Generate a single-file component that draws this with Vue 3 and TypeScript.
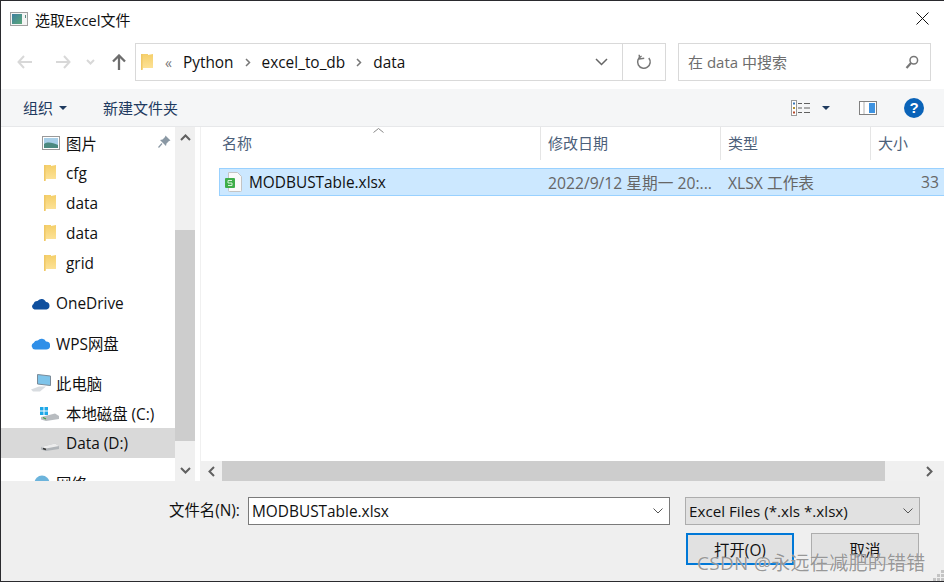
<template>
  <div class="dialog">
    <header class="titlebar">
      <svg class="title-icon" width="18" height="14" viewBox="0 0 18 14">
        <rect x="0.5" y="0.5" width="17" height="13" fill="#f4f4f4" stroke="#a0a0a0" />
        <defs>
          <linearGradient id="ti" x1="0" y1="0" x2="1" y2="1">
            <stop offset="0" stop-color="#3f7fa0" />
            <stop offset="1" stop-color="#5aa878" />
          </linearGradient>
        </defs>
        <rect x="2" y="2" width="10" height="10" fill="url(#ti)" />
        <rect x="15" y="3" width="1" height="3" fill="#5a8a80" />
      </svg>
      <span class="title-text">选取Excel文件</span>
      <svg class="close" width="13" height="13" viewBox="0 0 13 13">
        <path d="M0.5 0.5L12.5 12.5M12.5 0.5L0.5 12.5" stroke="#111" stroke-width="1" fill="none" />
      </svg>
    </header>

    <nav class="navbar">
      <div class="nav-buttons">
        <svg width="16" height="14" viewBox="0 0 16 14"><path d="M7 1L1.5 7L7 13M2 7H15" class="arrow-off" /></svg>
        <svg width="16" height="14" viewBox="0 0 16 14"><path d="M9 1L14.500 7L9 13M14 7H1" class="arrow-off" /></svg>
        <svg width="9" height="6" viewBox="0 0 9 6"><path d="M1 1L4.500 4.500L8 1" class="arrow-off" /></svg>
        <svg width="14" height="16" viewBox="0 0 14 16"><path d="M1 7.500L7 1.500L13 7.500M7 2V16" class="arrow-on" /></svg>
      </div>
      <div class="address">
        <svg class="folder-small" width="12" height="18" viewBox="0 0 12 18"><use href="#folder" /></svg>
        <span class="crumb-more">«</span>
        <span>Python</span>
        <svg width="6" height="9" viewBox="0 0 6 9"><path d="M1 1L4.500 4.500L1 8" class="crumb-sep" /></svg>
        <span>excel_to_db</span>
        <svg width="6" height="9" viewBox="0 0 6 9"><path d="M1 1L4.500 4.500L1 8" class="crumb-sep" /></svg>
        <span>data</span>
        <span class="spacer" />
        <svg width="13" height="8" viewBox="0 0 13 8"><path d="M1 1L6.500 6.500L12 1" fill="none" stroke="#666" stroke-width="1.500" /></svg>
        <span class="address-refresh">
          <svg width="16" height="16" viewBox="0 0 16 16">
            <path d="M12.800 4A6.300 6.300 0 1 1 5.600 2.100" fill="none" stroke="#777" stroke-width="1.500" />
            <path d="M3.500 0.500V4.800H8" fill="none" stroke="#777" stroke-width="1.500" transform="rotate(-8 5 3)" />
          </svg>
        </span>
      </div>
      <div class="search">
        <span class="search-text">在 data 中搜索</span>
        <svg width="14" height="15" viewBox="0 0 14 15">
          <circle cx="8.800" cy="5.200" r="3.800" fill="none" stroke="#777" stroke-width="1.500" />
          <path d="M6 8L1.500 13" stroke="#777" stroke-width="2.200" />
        </svg>
      </div>
    </nav>

    <div class="toolbar">
      <span class="tool">组织</span>
      <span class="caret dark tool-caret" />
      <span class="tool new-folder">新建文件夹</span>
      <span class="spacer" />
      <svg class="view-icon" width="19" height="16" viewBox="0 0 19 16">
        <rect x="0.500" y="0.500" width="5" height="15" fill="#fff" stroke="#9a9a9a" />
        <rect x="2" y="2.500" width="2" height="2" fill="#3a78b8" />
        <rect x="2" y="7" width="2" height="2" fill="#b09030" />
        <rect x="2" y="11.500" width="2" height="2" fill="#b84a2a" />
        <path d="M7 3.500H11M13 3.500H19M7 8H11M13 8H19M7 12.500H11M13 12.500H19" stroke="#606060" />
      </svg>
      <span class="caret dark view-caret" />
      <svg class="pane-icon" width="18" height="14" viewBox="0 0 18 14">
        <rect x="0.500" y="0.500" width="17" height="13" fill="#fff" stroke="#808080" />
        <rect x="10" y="2" width="6" height="10" fill="#3d92e0" />
        <path d="M5 1V13" stroke="#b0b0b0" />
      </svg>
      <span class="help">?</span>
    </div>

    <main class="body">
      <aside class="sidebar">
        <div class="tree">
          <div class="tree-row sub pinned">
            <svg class="pic-icon" width="18" height="14" viewBox="0 0 18 14">
              <rect x="0.500" y="0.500" width="17" height="13" fill="#fff" stroke="#999" />
              <rect x="2" y="2" width="14" height="10" fill="#a8cfe8" />
              <path d="M2 8C6 5 11 7 16 9V12H2Z" fill="#4c8a80" />
            </svg>
            <span>图片</span>
            <svg class="pin" width="13" height="13" viewBox="0 0 13 13">
              <path d="M7.500 0.500L12.500 5.500L11 6L8.500 8.500L8 11L2 5L4.500 4.500L7 2Z" fill="#8a98a4" />
              <path d="M4 8.500L0.500 12.500" stroke="#8a98a4" stroke-width="1.200" />
            </svg>
          </div>
          <div v-for="f in folders" :key="f.id" class="tree-row sub">
            <svg class="folder-icon" width="12" height="18" viewBox="0 0 12 18"><use href="#folder" /></svg>
            <span>{{ f.name }}</span>
          </div>
          <div class="tree-row top gap">
            <svg class="cloud" width="19" height="13" viewBox="0 0 19 13">
              <path d="M3.500 12.500A3 3 0 0 1 2.500 7A4 4 0 0 1 6.500 4A5 5 0 0 1 15 5A3.800 3.800 0 0 1 15.500 12.500Z" fill="#0f4f9e" />
            </svg>
            <span>OneDrive</span>
          </div>
          <div class="tree-row top gap">
            <svg class="cloud" width="19" height="14" viewBox="0 0 19 14">
              <path d="M4 13.500A3.500 3.500 0 0 1 2.800 6.800A4 4 0 0 1 6.800 4.500A5 5 0 0 1 15 5.500A4 4 0 0 1 15.200 13.500Z" fill="#2f8fe8" />
            </svg>
            <span>WPS网盘</span>
          </div>
          <div class="tree-row top gap">
            <svg class="monitor" width="20" height="18" viewBox="0 0 20 18">
              <path d="M6.500 0.500L19.500 2V11.500L6.500 10Z" fill="#7ec4ea" stroke="#7a8a98" />
              <path d="M0 15.500L8 12.500H15L9 17.500H2Z" fill="#d8dce0" />
            </svg>
            <span>此电脑</span>
          </div>
          <div class="tree-row sub drive">
            <svg class="drive-icon" width="20" height="16" viewBox="0 0 20 16">
              <path d="M0 2H3.500V5.500H0ZM4.500 2H8V5.500H4.500ZM0 6.500H3.500V10H0ZM4.500 6.500H8V10H4.500Z" fill="#1fa8e8" />
              <path d="M1 12L15 8.500L19 11V14L6 16L1 14.500Z" fill="#b8bcc0" />
              <path d="M3 12.500L6 14" stroke="#40a040" stroke-width="1.200" />
            </svg>
            <span>本地磁盘 (C:)</span>
          </div>
          <div class="tree-row sub drive selected">
            <svg class="drive-icon" width="20" height="16" viewBox="0 0 20 16">
              <path d="M1 12L15 8.500L19 11V14L6 16L1 14.500Z" fill="#b0b4b8" />
              <path d="M1 12L15 8.500L19 11L6 13.500Z" fill="#ececec" />
              <path d="M3 13.500L6 14.500" stroke="#333" stroke-width="1.400" />
            </svg>
            <span>Data (D:)</span>
          </div>
          <div class="tree-row top gap">
            <svg class="cloud" width="19" height="18" viewBox="0 0 19 18">
              <circle cx="11" cy="9" r="7.500" fill="#6cb4dc" />
              <path d="M1 14C5 10 10 10 14 13L8 16Z" fill="#a8d4ec" />
            </svg>
            <span>网络</span>
          </div>
        </div>
        <div class="vscroll">
          <svg class="scroll-arrow" width="11" height="7" viewBox="0 0 11 7"><path d="M1 6L5.500 1.500L10 6" /></svg>
          <div class="vtrack"><div class="vthumb" /></div>
          <svg class="scroll-arrow" width="11" height="7" viewBox="0 0 11 7"><path d="M1 1L5.500 5.500L10 1" /></svg>
        </div>
      </aside>

      <section class="files">
        <div class="file-head">
          <svg class="sort" width="11" height="5" viewBox="0 0 11 5"><path d="M0.500 4.500L5.500 0.500L10.500 4.500" fill="none" stroke="#888" /></svg>
          <div class="col col-name">名称</div>
          <div class="col col-date">修改日期</div>
          <div class="col col-type">类型</div>
          <div class="col col-size">大小</div>
        </div>
        <div class="file-list">
          <div class="file-row">
            <div class="cell-name">
              <svg width="18" height="20" viewBox="0 0 18 20">
                <path d="M3.500 0.500H12.500L16.500 4.500V18.500Q16.500 19.500 15.500 19.500H4.500Q3.500 19.500 3.500 18.500Z" fill="#fafafa" stroke="#c4c4c4" />
                <rect x="0" y="6" width="10" height="10" rx="1" fill="#3fae4a" />
                <path d="M7 8.500H3V11H7V13.500H3" fill="none" stroke="#d6f2d8" />
              </svg>
              <span>MODBUSTable.xlsx</span>
            </div>
            <div class="cell-date">2022/9/12 星期一 20:...</div>
            <div class="cell-type">XLSX 工作表</div>
            <div class="cell-size">33</div>
          </div>
        </div>
        <div class="hscroll">
          <svg class="scroll-arrow h" width="7" height="11" viewBox="0 0 7 11"><path d="M6 1L1.500 5.500L6 10" /></svg>
          <div class="hthumb" />
          <svg class="scroll-arrow h right" width="7" height="11" viewBox="0 0 7 11"><path d="M1 1L5.500 5.500L1 10" /></svg>
        </div>
      </section>
    </main>

    <footer class="footer">
      <div class="form-row">
        <label class="name-label">文件名(N):</label>
        <div class="name-input">
          <span>MODBUSTable.xlsx</span>
          <svg width="10" height="6" viewBox="0 0 10 6"><path d="M0.500 0.500L5 5L9.500 0.500" class="chev" /></svg>
        </div>
        <div class="filter">
          <span>Excel Files (*.xls *.xlsx)</span>
          <svg width="10" height="6" viewBox="0 0 10 6"><path d="M0.500 0.500L5 5L9.500 0.500" class="chev" /></svg>
        </div>
      </div>
      <div class="button-row">
        <button class="btn primary">打开(O)</button>
        <button class="btn">取消</button>
      </div>
    </footer>

    <svg class="grip" width="11" height="11" viewBox="0 0 11 11">
      <path d="M8 0h3v3H8zM4 4h3v3H4zM8 4h3v3H8zM0 8h3v3H0zM4 8h3v3H4zM8 8h3v3H8z" fill="#c4c4c4" />
    </svg>
    <div class="watermark">CSDN @永远在减肥的错错</div>

    <svg width="0" height="0" class="defs">
      <defs>
        <linearGradient id="fg" x1="0" y1="0" x2="0" y2="1">
          <stop offset="0" stop-color="#f5cf6a" />
          <stop offset="1" stop-color="#fde49c" />
        </linearGradient>
        <symbol id="folder" viewBox="0 0 12 18">
          <path d="M0 1H7V2L12 1V15H2V17L0 15Z" fill="url(#fg)" />
          <path d="M0 1H1.500V17H0Z" fill="#f0c866" />
        </symbol>
      </defs>
    </svg>
  </div>
</template>

<script setup lang="ts">
const folders = [
  { id: 1, name: 'cfg' },
  { id: 2, name: 'data' },
  { id: 3, name: 'data' },
  { id: 4, name: 'grid' },
]
</script>

<style>
html,
body {
  margin: 0;
  background: #fff;
}
</style>

<style scoped>
.dialog {
  position: relative;
  width: 944px;
  height: 582px;
  box-sizing: border-box;
  display: flex;
  flex-direction: column;
  overflow: hidden;
  background: #fff;
  border-top: 1px solid #2a2a2e;
  border-left: 1px solid #2a2a2e;
  border-bottom: 1px solid #2a2a2e;
  font-family: 'Open Sans', 'Noto Sans CJK SC', sans-serif;
  font-size: 15.400px;
  color: #111;
}

.defs {
  position: absolute;
}

.spacer {
  flex: 1;
}

.titlebar {
  height: 36px;
  flex: none;
  display: flex;
  align-items: center;
  padding-left: 9px;
  padding-right: 15px;
}

.title-text {
  margin-left: 7px;
  font-size: 15px;
}

.close {
  margin-left: auto;
  margin-top: -2px;
}

.navbar {
  height: 52px;
  flex: none;
  display: flex;
  box-sizing: border-box;
  padding: 6px 13px 8px 0;
}

.nav-buttons {
  width: 134px;
  flex: none;
  display: flex;
  align-items: center;
  padding-left: 16px;
  box-sizing: border-box;
}

.nav-buttons svg:nth-child(2) {
  margin-left: 22px;
}

.nav-buttons svg:nth-child(3) {
  margin-left: 15px;
}

.nav-buttons svg:nth-child(4) {
  margin-left: 17px;
}

.arrow-off {
  fill: none;
  stroke: #d8d8d8;
  stroke-width: 2;
}

.arrow-on {
  fill: none;
  stroke: #6d6d6d;
  stroke-width: 2.300;
}

.address {
  width: 531px;
  flex: none;
  box-sizing: border-box;
  border: 1px solid #d9d9d9;
  display: flex;
  align-items: center;
  padding-left: 5px;
  gap: 11px;
  white-space: nowrap;
}

.crumb-more {
  margin-left: 1px;
  color: #777;
  font-size: 14px;
}

.crumb-sep {
  fill: none;
  stroke: #777;
  stroke-width: 1.500;
}

.address-refresh {
  width: 42px;
  align-self: stretch;
  display: flex;
  align-items: center;
  justify-content: center;
  border-left: 1px solid #d9d9d9;
  margin-left: 3px;
}

.search {
  margin-left: 12px;
  flex: 1;
  box-sizing: border-box;
  border: 1px solid #d9d9d9;
  display: flex;
  align-items: center;
  justify-content: space-between;
  padding: 0 11px 0 9px;
  color: #6d6d6d;
}

.search-text {
  font-size: 15px;
  margin-top: -2px;
}

.toolbar {
  height: 38px;
  flex: none;
  box-sizing: border-box;
  background: #f5f6f7;
  border-bottom: 1px solid #e7e8ea;
  display: flex;
  align-items: center;
  padding-left: 22px;
  padding-right: 20px;
}

.tool {
  color: #1e3a5f;
  font-size: 15px;
}

.new-folder {
  margin-left: 36px;
}

.caret {
  width: 0;
  height: 0;
  border-left: 4px solid transparent;
  border-right: 4px solid transparent;
  border-top: 4px solid #1e3a5f;
}

.tool-caret {
  margin-left: 6px;
}

.view-caret {
  margin-left: 12px;
}

.pane-icon {
  margin-left: 29px;
}

.help {
  margin-left: 27px;
  width: 20px;
  height: 20px;
  border-radius: 50%;
  background: #0a63b8;
  color: #fff;
  font-family: 'Liberation Sans', sans-serif;
  font-weight: 700;
  font-size: 15px;
  line-height: 20px;
  text-align: center;
}

.body {
  height: 354px;
  flex: none;
  display: flex;
  overflow: hidden;
}

.sidebar {
  width: 200px;
  flex: none;
  display: flex;
  border-right: 1px solid #f0f0f0;
  box-sizing: border-box;
  padding-right: 4px;
}

.tree {
  width: 174px;
  flex: none;
  overflow: hidden;
  padding-top: 1px;
}

.tree-row {
  height: 30px;
  display: flex;
  align-items: center;
  position: relative;
  white-space: nowrap;
}

.tree-row.gap {
  margin-top: 10px;
}

.tree-row.top {
  padding-left: 30px;
  gap: 6px;
}

.monitor {
  margin-right: -1px;
}

.tree-row.sub {
  padding-left: 41px;
  gap: 6px;
}

.tree-row.sub.drive {
  padding-left: 39px;
  gap: 6px;
}

.tree-row.selected {
  background: #d9d9d9;
}

.folder-icon {
  margin-left: 2px;
  margin-right: 4px;
}

.pin {
  position: absolute;
  right: 4px;
  top: 7px;
}

.vscroll {
  width: 20px;
  flex: none;
  background: #f0f0f0;
  display: flex;
  flex-direction: column;
  align-items: center;
}

.vtrack {
  flex: 1;
  width: 100%;
  padding-top: 75px;
  margin-top: 7px;
  box-sizing: border-box;
}

.vthumb {
  height: 211px;
  background: #cdcdcd;
}

.scroll-arrow {
  flex: none;
  margin: 7px 0;
}

.scroll-arrow path {
  fill: none;
  stroke: #606060;
  stroke-width: 2;
}

.files {
  flex: 1;
  min-width: 0;
  display: flex;
  flex-direction: column;
  position: relative;
}

.file-head {
  height: 33px;
  flex: none;
  display: flex;
  padding-left: 19px;
  color: #4c607a;
  font-size: 15px;
}

.sort {
  position: absolute;
  left: 172px;
  top: 1px;
}

.col {
  box-sizing: border-box;
  padding-left: 2px;
  line-height: 33px;
}

.col-name {
  width: 321px;
  border-right: 1px solid #e5e5e5;
}

.col-date {
  width: 180px;
  padding-left: 7px;
  border-right: 1px solid #e5e5e5;
}

.col-type {
  width: 150px;
  padding-left: 7px;
  border-right: 1px solid #e5e5e5;
}

.col-size {
  padding-left: 7px;
}

.file-list {
  flex: 1;
  padding: 8px 0 0 18px;
}

.file-row {
  height: 28px;
  box-sizing: border-box;
  background: #cce8ff;
  border: 1px solid #99d1ff;
  border-right: none;
  display: flex;
  align-items: center;
  color: #666;
  font-size: 15.700px;
}

.cell-name {
  width: 321px;
  flex: none;
  display: flex;
  align-items: center;
  gap: 6px;
  padding-left: 5px;
  box-sizing: border-box;
  color: #111;
  font-size: 15.400px;
}

.cell-date {
  width: 180px;
  flex: none;
  box-sizing: border-box;
  padding-left: 7px;
  white-space: nowrap;
}

.cell-type {
  width: 150px;
  flex: none;
  box-sizing: border-box;
  padding-left: 7px;
}

.cell-size {
  flex: 1;
  text-align: right;
  padding-right: 5px;
}

.hscroll {
  height: 20px;
  flex: none;
  background: #f0f0f0;
  display: flex;
  align-items: center;
}

.hthumb {
  width: 663px;
  height: 100%;
  background: #cdcdcd;
  margin-left: 7px;
}

.scroll-arrow.h {
  margin: 0 0 0 7px;
}

.scroll-arrow.h.right {
  margin-left: 41px;
}

.footer {
  flex: 1;
  background: #efefef;
  box-sizing: border-box;
  padding-top: 16px;
}

.form-row {
  display: flex;
  height: 28px;
}

.name-label {
  margin-left: 168px;
  width: 79px;
  line-height: 28px;
  white-space: nowrap;
}

.name-input,
.filter {
  box-sizing: border-box;
  display: flex;
  align-items: center;
  justify-content: space-between;
  padding: 0 6px 0 3px;
  white-space: nowrap;
}

.name-input {
  width: 422px;
  background: #fff;
  border: 1px solid #7a7a7a;
}

.filter {
  width: 235px;
  margin-left: 15px;
  background: #e1e1e1;
  border: 1px solid #adadad;
  font-size: 15.200px;
}

.chev {
  fill: none;
  stroke: #555;
}

.button-row {
  display: flex;
  margin: 8px 0 0 685px;
  gap: 17px;
}

.btn {
  width: 108px;
  height: 32px;
  box-sizing: border-box;
  background: #e1e1e1;
  border: 1px solid #adadad;
  padding: 0;
  font: inherit;
  color: #111;
}

.btn.primary {
  border: 2px solid #0078d7;
}

.grip {
  position: absolute;
  right: 0;
  bottom: 0;
}

.watermark {
  position: absolute;
  left: 696px;
  top: 547px;
  font-size: 19px;
  letter-spacing: 0.300px;
  color: rgba(125, 125, 125, 0.8);
  white-space: nowrap;
  text-shadow: 0 0 1px rgba(255, 255, 255, 0.9);
}
</style>
